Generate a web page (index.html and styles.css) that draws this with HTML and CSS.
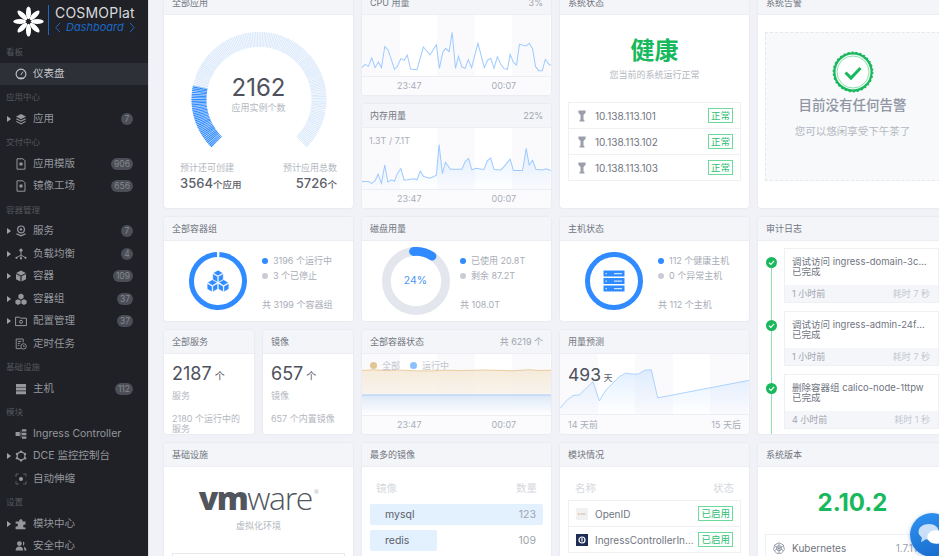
FILE: index.html
```html
<!DOCTYPE html>
<html lang="zh-CN">
<head>
    <meta charset="UTF-8">
    <title>COSMOPlat Dashboard</title>
    <link rel="stylesheet" href="styles.css">
</head>
<body>
    <aside class="sidebar">
        <div class="brand">
            <svg class="brand-logo" viewBox="0 0 32 32">
                <g fill="#fff">
                    <ellipse cx="16" cy="7" rx="2.6" ry="6.6"/>
                    <ellipse cx="16" cy="7" rx="2.6" ry="6.6" transform="rotate(45 16 16)"/>
                    <ellipse cx="16" cy="7" rx="2.6" ry="6.6" transform="rotate(90 16 16)"/>
                    <ellipse cx="16" cy="7" rx="2.6" ry="6.6" transform="rotate(135 16 16)"/>
                    <ellipse cx="16" cy="7" rx="2.6" ry="6.6" transform="rotate(180 16 16)"/>
                    <ellipse cx="16" cy="7" rx="2.6" ry="6.6" transform="rotate(225 16 16)"/>
                    <ellipse cx="16" cy="7" rx="2.6" ry="6.6" transform="rotate(270 16 16)"/>
                    <ellipse cx="16" cy="7" rx="2.6" ry="6.6" transform="rotate(315 16 16)"/>
                </g>
            </svg>
            <div class="brand-text">
                <div class="brand-name">COSMOPlat</div>
                <div class="brand-sub">
                    <svg viewBox="0 0 6 11"><path d="M5 .8.9 5.5 5 10.2" fill="none" stroke="currentColor" stroke-width="1"/></svg>
                    <span>Dashboard</span>
                    <svg viewBox="0 0 6 11"><path d="M1 .8 5.1 5.5 1 10.2" fill="none" stroke="currentColor" stroke-width="1"/></svg>
                </div>
            </div>
        </div>

        <div class="nav-label">看板</div>
        <div class="nav-item active">
            <span class="caret none"></span>
            <svg class="nav-icon" viewBox="0 0 12 12"><circle cx="6" cy="6" r="4.9" fill="none" stroke="currentColor" stroke-width="1.1"/><path d="M3.3 9.6h5.4v1.4H3.3zM5.4 6.4 8 3.4l.5.4-2.3 3.2z" fill="currentColor"/></svg>
            <span class="nav-text">仪表盘</span>
        </div>

        <div class="nav-label">应用中心</div>
        <div class="nav-item">
            <span class="caret"></span>
            <svg class="nav-icon" viewBox="0 0 12 12"><path d="M6 1 11 3.6 6 6.2 1 3.6zM1.6 5.3 6 7.6l4.4-2.3.6.9L6 8.8 1 6.2zM1.6 7.9 6 10.2l4.4-2.3.6.9L6 11.4 1 8.8z" fill="currentColor"/></svg>
            <span class="nav-text">应用</span>
            <span class="badge">7</span>
        </div>

        <div class="nav-label">交付中心</div>
        <div class="nav-item">
            <span class="caret none"></span>
            <svg class="nav-icon" viewBox="0 0 12 12"><path d="M2 .8h6l2 2v8.4H2z" fill="none" stroke="currentColor"/><rect x="4.4" y="4.4" width="3.2" height="3.2" rx=".8" fill="currentColor"/></svg>
            <span class="nav-text">应用模版</span>
            <span class="badge">906</span>
        </div>
        <div class="nav-item">
            <span class="caret none"></span>
            <svg class="nav-icon" viewBox="0 0 12 12"><path d="M2 .8h6l2 2v8.4H2z" fill="none" stroke="currentColor"/><circle cx="6" cy="6" r="1.7" fill="currentColor"/></svg>
            <span class="nav-text">镜像工场</span>
            <span class="badge">656</span>
        </div>

        <div class="nav-label">容器管理</div>
        <div class="nav-item">
            <span class="caret"></span>
            <svg class="nav-icon" viewBox="0 0 12 12"><circle cx="6" cy="4.4" r="3.4" fill="none" stroke="currentColor" stroke-width="1.2"/><circle cx="6" cy="4.4" r="1.2" fill="currentColor"/><path d="M1.4 8.2 6 10l4.6-1.8v1.2L6 11.6 1.4 9.4z" fill="currentColor"/></svg>
            <span class="nav-text">服务</span>
            <span class="badge">7</span>
        </div>
        <div class="nav-item">
            <span class="caret"></span>
            <svg class="nav-icon" viewBox="0 0 12 12"><path d="M6 3v4M6 7 1.6 9.6M6 7l4.4 2.6M6 7v3.4" fill="none" stroke="currentColor" stroke-width=".9"/><circle cx="6" cy="2.2" r="1.6" fill="currentColor"/><circle cx="1.5" cy="9.8" r="1.1" fill="currentColor"/><circle cx="10.5" cy="9.8" r="1.1" fill="currentColor"/><circle cx="6" cy="10.4" r="1.1" fill="currentColor"/></svg>
            <span class="nav-text">负载均衡</span>
            <span class="badge">4</span>
        </div>
        <div class="nav-item">
            <span class="caret"></span>
            <svg class="nav-icon" viewBox="0 0 12 12"><path d="M6 .6 10.8 3 6 5.4 1.2 3zM1 4l4.4 2.2v5.2L1 9.2zM11 4 6.6 6.2v5.2L11 9.2z" fill="currentColor"/></svg>
            <span class="nav-text">容器</span>
            <span class="badge">109</span>
        </div>
        <div class="nav-item">
            <span class="caret"></span>
            <svg class="nav-icon" viewBox="0 0 12 12"><path d="M6 .6 8.6 2v3L6 6.4 3.4 5V2zM3 6.2l2.6 1.4v3L3 12 .4 10.6v-3zM9 6.2l2.6 1.4v3L9 12l-2.6-1.4v-3z" fill="currentColor"/></svg>
            <span class="nav-text">容器组</span>
            <span class="badge">37</span>
        </div>
        <div class="nav-item">
            <span class="caret"></span>
            <svg class="nav-icon" viewBox="0 0 12 12"><path d="M.6 2.2h4l1 1h5.8v7.4H.6z" fill="none" stroke="currentColor"/><circle cx="6" cy="6.8" r="1.5" fill="none" stroke="currentColor"/></svg>
            <span class="nav-text">配置管理</span>
            <span class="badge">37</span>
        </div>
        <div class="nav-item">
            <span class="caret none"></span>
            <svg class="nav-icon" viewBox="0 0 12 12"><path d="M6 10.6H1.2V1h7v3.4M2.8 3.4h3.6M2.8 5.4h2.4M2.8 7.4h1.6" fill="none" stroke="currentColor" stroke-width=".9"/><circle cx="8.6" cy="8.4" r="2.7" fill="none" stroke="currentColor" stroke-width=".9"/><path d="M8.6 7v1.5h1.2" fill="none" stroke="currentColor" stroke-width=".7"/></svg>
            <span class="nav-text">定时任务</span>
        </div>

        <div class="nav-label">基础设施</div>
        <div class="nav-item">
            <span class="caret none"></span>
            <svg class="nav-icon" viewBox="0 0 12 12"><path d="M1 1h10v3H1zM1 4.6h10v3H1zM1 8.2h10v3H1z" fill="currentColor"/></svg>
            <span class="nav-text">主机</span>
            <span class="badge">112</span>
        </div>

        <div class="nav-label">模块</div>
        <div class="nav-item">
            <span class="caret none"></span>
            <svg class="nav-icon" viewBox="0 0 12 12"><path d="M.6 4h4.2v4H.6zM7 1.2h4.4v2.4H7zM7 4.8h4.4v2.4H7zM7 8.400h4.400v2.400H7z" fill="currentColor"/><path d="M4.8 6h2.2M6 2.400V9.600" fill="none" stroke="currentColor" stroke-width=".6"/></svg>
            <span class="nav-text">Ingress Controller</span>
        </div>
        <div class="nav-item">
            <span class="caret"></span>
            <svg class="nav-icon" viewBox="0 0 12 12"><circle cx="6" cy="6" r="3.9" fill="none" stroke="currentColor" stroke-width="1.2"/><g fill="currentColor"><circle cx="6" cy="1.6" r="1.2"/><circle cx="10" cy="4" r="1.2"/><circle cx="10" cy="8.2" r="1.2"/><circle cx="6" cy="10.4" r="1.2"/><circle cx="2" cy="8.2" r="1.2"/><circle cx="2" cy="4" r="1.2"/></g></svg>
            <span class="nav-text">DCE 监控控制台</span>
        </div>
        <div class="nav-item">
            <span class="caret none"></span>
            <svg class="nav-icon" viewBox="0 0 12 12"><circle cx="6" cy="6" r="2" fill="currentColor"/><path d="M1 3.400V1h2.400M8.600 1H11v2.400M11 8.600V11H8.600M3.400 11H1V8.600" fill="none" stroke="currentColor" stroke-dasharray="1 1"/></svg>
            <span class="nav-text">自动伸缩</span>
        </div>

        <div class="nav-label">设置</div>
        <div class="nav-item">
            <span class="caret"></span>
            <svg class="nav-icon" viewBox="0 0 12 12"><path d="M4.2 2.6a1.7 1.7 0 0 1 3.3 0v.8h3v3h-.9a1.5 1.5 0 0 0 0 3h.9v1.8H.6V8.6h.9a1.5 1.5 0 0 0 0-3H.6V3.4h3.6z" fill="currentColor"/></svg>
            <span class="nav-text">模块中心</span>
        </div>
        <div class="nav-item">
            <span class="caret none"></span>
            <svg class="nav-icon" viewBox="0 0 12 12"><circle cx="4.4" cy="3.6" r="2.4" fill="currentColor"/><path d="M.6 10.6c0-2.6 1.6-4 3.8-4s3.8 1.4 3.8 4zM8 1.4a2.4 2.4 0 0 1 0 4.4M9 6.800c1.500.4 2.400 1.800 2.400 3.800H9.400" fill="currentColor"/></svg>
            <span class="nav-text">安全中心</span>
        </div>
    </aside>

    <main class="main">
        <div class="board">
            <section class="card wide tall">
                <header class="card-head">全部应用</header>
                <div class="gauge-body">
                    <div class="gauge">
                        <svg viewBox="0 0 148 125">
                            <path d="M31.6 116.9A60 60 0 1 1 116.4 116.9" fill="none" stroke="#dbe9fb" stroke-width="15" stroke-dasharray="1.1 .5"/>
                            <path d="M31.6 116.9A60 60 0 0 1 15.3 62" fill="none" stroke="#2f8bff" stroke-width="15" stroke-dasharray="1.1 .5"/>
                        </svg>
                        <div class="gauge-text">
                            <div class="gauge-num">2162</div>
                            <div class="muted">应用实例个数</div>
                        </div>
                    </div>
                    <div class="gauge-foot">
                        <div>
                            <div class="muted">预计还可创建</div>
                            <div class="gauge-val">3564<small>个应用</small></div>
                        </div>
                        <div class="right">
                            <div class="muted">预计应用总数</div>
                            <div class="gauge-val">5726<small>个</small></div>
                        </div>
                    </div>
                </div>
            </section>

            <section class="card wide">
                <header class="card-head">CPU 用量<span class="head-extra">3%</span></header>
                <div class="chart">
                    <svg viewBox="21 45 564 183" preserveAspectRatio="none">
                        <polyline fill="none" stroke="#9ecbff" stroke-width="3" points="21,203 30,193 40,199 50,174 60,203 70,186 79,203 89,140 99,150 118,208 127,198 137,176 147,181 156,165 166,207 185,209 204,141 224,165 243,134 252,205 262,157 271,145 281,155 290,97 300,205 309,169 319,201 329,205 338,179 348,203 367,130 386,203 396,180 405,175 415,205 425,170 435,193 445,206 455,208 463,163 473,187 482,195 491,133 511,138 520,130 530,146 539,200 549,212 559,212 568,178 578,192 585,196"/>
                    </svg>
                </div>
                <footer class="time-axis"><span>23:47</span><span>00:07</span></footer>
            </section>

            <section class="card wide tall">
                <header class="card-head">系统状态</header>
                <div class="health">健康</div>
                <div class="muted center health-sub">您当前的系统运行正常</div>
                <ul class="rows">
                    <li class="row">
                        <svg class="pin" viewBox="0 0 8 12"><path d="M.4.4h7.200v2.400L5.500 5v4.800h.9v1.800H1.600V9.800h.9V5L.4 2.800z" fill="#9a9fab"/></svg>
                        <span class="row-name">10.138.113.101</span><span class="tag">正常</span>
                    </li>
                    <li class="row">
                        <svg class="pin" viewBox="0 0 8 12"><path d="M.4.4h7.200v2.400L5.500 5v4.800h.9v1.800H1.600V9.800h.9V5L.4 2.800z" fill="#9a9fab"/></svg>
                        <span class="row-name">10.138.113.102</span><span class="tag">正常</span>
                    </li>
                    <li class="row">
                        <svg class="pin" viewBox="0 0 8 12"><path d="M.4.4h7.200v2.400L5.500 5v4.800h.9v1.800H1.600V9.800h.9V5L.4 2.800z" fill="#9a9fab"/></svg>
                        <span class="row-name">10.138.113.103</span><span class="tag">正常</span>
                    </li>
                </ul>
            </section>

            <section class="card wide tall">
                <header class="card-head">系统告警</header>
                <div class="alert-wrap">
                    <div class="alert-box">
                        <svg class="seal" viewBox="0 0 42 42">
                            <circle cx="21" cy="21" r="18.6" fill="none" stroke="#18b95d" stroke-width="2.2"/>
                            <circle cx="21" cy="21" r="19.6" fill="none" stroke="#18b95d" stroke-width="1.6" stroke-dasharray="2 2.1"/>
                            <circle cx="21" cy="21" r="16" fill="#fff" stroke="#6fd79c" stroke-width=".8"/>
                            <path d="M13.5 21.500 19 27l9.500-10" fill="none" stroke="#18b95d" stroke-width="3"/>
                        </svg>
                        <div class="alert-title">目前没有任何告警</div>
                        <div class="alert-sub">您可以悠闲享受下午茶了</div>
                    </div>
                </div>
            </section>

            <section class="card wide">
                <header class="card-head">内存用量<span class="head-extra">22%</span></header>
                <div class="chart">
                    <svg viewBox="21 383 564 185" preserveAspectRatio="none">
                        <defs>
                            <linearGradient id="fade" x1="0" y1="0" x2="0" y2="1">
                                <stop offset="0" stop-color="#9ecbff" stop-opacity=".3"/>
                                <stop offset="1" stop-color="#9ecbff" stop-opacity="0"/>
                            </linearGradient>
                        </defs>
                        <polygon fill="url(#fade)" points="21,568 21,545 40,545 50,551 60,543 69,523 79,551 89,495 98,547 108,541 118,544 127,520 137,506 147,541 156,540 176,537 185,540 195,514 205,530 224,535 243,526 251,433 261,521 270,487 285,508 300,508 319,508 329,485 339,475 349,510 360,505 385,509 395,482 405,474 415,509 435,510 445,500 463,477 473,512 500,512 511,445 520,495 530,481 540,508 560,510 570,507 585,512 585,568"/>
                        <polyline fill="none" stroke="#9ecbff" stroke-width="3" points="21,545 40,545 50,551 60,543 69,523 79,551 89,495 98,547 108,541 118,544 127,520 137,506 147,541 156,540 176,537 185,540 195,514 205,530 224,535 243,526 251,433 261,521 270,487 285,508 300,508 319,508 329,485 339,475 349,510 360,505 385,509 395,482 405,474 415,509 435,510 445,500 463,477 473,512 500,512 511,445 520,495 530,481 540,508 560,510 570,507 585,512"/>
                    </svg>
                    <span class="chart-note">1.3T / 7.1T</span>
                </div>
                <footer class="time-axis"><span>23:47</span><span>00:07</span></footer>
            </section>

            <section class="card wide">
                <header class="card-head">全部容器组</header>
                <div class="donut-body">
                    <div class="donut">
                        <svg viewBox="0 0 68 68">
                            <circle cx="34" cy="34" r="26.5" fill="none" stroke="#2f8bff" stroke-width="5" stroke-dasharray="163 3.5" transform="rotate(-87 34 34)"/>
                            <g fill="#2f8bff" stroke="#fff" stroke-width=".5" transform="translate(6.8 6) scale(.8)">
                                <path d="M34 21.500 40 25l-6 3.500-6-3.500zM27.500 26l6 3.500v7l-6-3.500zM40.500 26l-6 3.500v7l6-3.500z"/>
                                <path d="M27 33.500l6 3.500-6 3.500-6-3.500zM20.500 38l6 3.500v7l-6-3.500zM33.500 38l-6 3.500v7l6-3.500z"/>
                                <path d="M41 33.500l6 3.500-6 3.500-6-3.500zM34.500 38l6 3.500v7l-6-3.500zM47.500 38l-6 3.500v7l6-3.500z"/>
                            </g>
                        </svg>
                    </div>
                    <div class="donut-info">
                        <div class="legend"><i class="dot blue"></i>3196 个运行中</div>
                        <div class="legend"><i class="dot gray"></i>3 个已停止</div>
                        <div class="total">共 3199 个容器组</div>
                    </div>
                </div>
            </section>

            <section class="card wide">
                <header class="card-head">磁盘用量</header>
                <div class="donut-body">
                    <div class="donut">
                        <svg viewBox="0 0 68 68">
                            <circle cx="34" cy="34" r="29.6" fill="none" stroke="#e3e6ed" stroke-width="8.8"/>
                            <path d="M31.500 4.500A29.6 29.6 0 0 1 50 9.100" fill="none" stroke="#2f8bff" stroke-width="8.8" stroke-linecap="round"/>
                        </svg>
                        <span class="donut-pct">24%</span>
                    </div>
                    <div class="donut-info">
                        <div class="legend"><i class="dot blue"></i>已使用 20.8T</div>
                        <div class="legend"><i class="dot gray"></i>剩余 87.2T</div>
                        <div class="total">共 108.0T</div>
                    </div>
                </div>
            </section>

            <section class="card wide">
                <header class="card-head">主机状态</header>
                <div class="donut-body">
                    <div class="donut">
                        <svg viewBox="0 0 68 68">
                            <circle cx="34" cy="34" r="26.5" fill="none" stroke="#2f8bff" stroke-width="5" stroke-dasharray="165.5 1" transform="rotate(-89 34 34)"/>
                            <g fill="#2f8bff">
                                <rect x="23.5" y="23.5" width="21" height="6"/>
                                <rect x="23.5" y="31" width="21" height="6"/>
                                <rect x="23.5" y="38.5" width="21" height="6"/>
                            </g>
                            <g fill="#cfe4ff">
                                <rect x="25.5" y="26" width="1.5" height="1.2"/><rect x="34" y="26" width="8" height="1.2"/>
                                <rect x="25.5" y="33.5" width="1.5" height="1.2"/><rect x="34" y="33.5" width="8" height="1.2"/>
                                <rect x="25.5" y="41" width="1.5" height="1.2"/><rect x="34" y="41" width="8" height="1.2"/>
                            </g>
                        </svg>
                    </div>
                    <div class="donut-info">
                        <div class="legend"><i class="dot blue"></i>112 个健康主机</div>
                        <div class="legend"><i class="dot gray"></i>0 个异常主机</div>
                        <div class="total">共 112 个主机</div>
                    </div>
                </div>
            </section>

            <section class="card wide audit">
                <header class="card-head">审计日志</header>
                <div class="audit-body">
                    <div class="entry">
                        <i class="entry-dot"><svg viewBox="0 0 11 11"><path d="M3 5.600 4.900 7.400 8.100 3.900" fill="none" stroke="#fff" stroke-width="1.2"/></svg></i>
                        <div class="entry-main"><span class="entry-line">调试访问 ingress-domain-3cf0d9a1b</span>已完成</div>
                        <div class="entry-foot"><span>1 小时前</span><span class="entry-cost">耗时 7 秒</span></div>
                    </div>
                    <div class="entry">
                        <i class="entry-dot"><svg viewBox="0 0 11 11"><path d="M3 5.600 4.900 7.400 8.100 3.900" fill="none" stroke="#fff" stroke-width="1.2"/></svg></i>
                        <div class="entry-main"><span class="entry-line">调试访问 ingress-admin-24f7c1e8d</span>已完成</div>
                        <div class="entry-foot"><span>1 小时前</span><span class="entry-cost">耗时 7 秒</span></div>
                    </div>
                    <div class="entry">
                        <i class="entry-dot"><svg viewBox="0 0 11 11"><path d="M3 5.600 4.900 7.400 8.100 3.900" fill="none" stroke="#fff" stroke-width="1.2"/></svg></i>
                        <div class="entry-main"><span class="entry-line">删除容器组 calico-node-1ttpw</span>已完成</div>
                        <div class="entry-foot"><span>4 小时前</span><span class="entry-cost">耗时 1 秒</span></div>
                    </div>
                </div>
            </section>

            <section class="card">
                <header class="card-head">全部服务</header>
                <div class="stat">
                    <div class="stat-num">2187<small>个</small></div>
                    <div class="muted stat-name">服务</div>
                    <div class="muted stat-desc">2180 个运行中的服务</div>
                </div>
            </section>

            <section class="card">
                <header class="card-head">镜像</header>
                <div class="stat">
                    <div class="stat-num">657<small>个</small></div>
                    <div class="muted stat-name">镜像</div>
                    <div class="muted stat-desc">657 个内置镜像</div>
                </div>
            </section>

            <section class="card wide">
                <header class="card-head">全部容器状态<span class="head-extra">共 6219 个</span></header>
                <div class="chart">
                    <svg viewBox="0 0 188 61" preserveAspectRatio="none">
                        <defs>
                            <linearGradient id="tan" x1="0" y1="0" x2="0" y2="1">
                                <stop offset="0" stop-color="#f5e8d5" stop-opacity=".85"/>
                                <stop offset="1" stop-color="#f8f2ea" stop-opacity=".85"/>
                            </linearGradient>
                            <linearGradient id="run" x1="0" y1="0" x2="0" y2="1">
                                <stop offset="0" stop-color="#dce8f7"/>
                                <stop offset="1" stop-color="#fff"/>
                            </linearGradient>
                        </defs>
                        <path d="M0 16.500 12 15.800 24 16.600 36 16 54 16.800 66 17 84 16.200 100 16.600 120 16 138 16.400 150 16.800 166 15.800 178 16.600 188 16.200V41H0z" fill="url(#tan)"/>
                        <path d="M0 41h188v20H0z" fill="url(#run)"/>
                        <path d="M0 16.500 12 15.800 24 16.600 36 16 54 16.800 66 17 84 16.200 100 16.600 120 16 138 16.400 150 16.800 166 15.800 178 16.600 188 16.200" fill="none" stroke="#e6c996" stroke-width=".9"/>
                        <path d="M0 41h188" stroke="#a8d0fb" stroke-width="1"/>
                    </svg>
                    <div class="chart-legend">
                        <span><i class="dot tan"></i>全部</span>
                        <span><i class="dot sky"></i>运行中</span>
                    </div>
                </div>
                <footer class="time-axis"><span>23:47</span><span>00:07</span></footer>
            </section>

            <section class="card wide">
                <header class="card-head">用量预测</header>
                <div class="chart">
                    <svg viewBox="27 417 567 182" preserveAspectRatio="none">
                        <polygon fill="url(#fade)" points="27,599 27,582 47,558 66,543 85,541 126,501 145,559 165,526 205,486 224,475 243,478 262,478 282,466 301,465 320,550 594,497 594,599"/>
                        <polyline fill="none" stroke="#9ecbff" stroke-width="2.5" points="27,582 47,558 66,543 85,541 126,501 145,559 165,526 205,486 224,475 243,478 262,478 282,466 301,465 320,550 594,497"/>
                    </svg>
                    <div class="forecast"><b>493</b> 天</div>
                </div>
                <footer class="range-axis"><span>14 天前</span><span>15 天后</span></footer>
            </section>

            <section class="card wide tall">
                <header class="card-head">基础设施</header>
                <div class="vm-logo"><b>vm</b>ware<sup>®</sup></div>
                <div class="muted center vm-sub">虚拟化环境</div>
                <div class="vm-box"></div>
            </section>

            <section class="card wide tall">
                <header class="card-head">最多的镜像</header>
                <div class="table-head image-head"><span>镜像</span><span>数量</span></div>
                <div class="bars">
                    <div class="bar"><i class="bar-fill full"></i><span>mysql</span><em>123</em></div>
                    <div class="bar"><i class="bar-fill mid"></i><span>redis</span><em>109</em></div>
                    <div class="bar"><i class="bar-fill small"></i><span>nginx</span><em>87</em></div>
                </div>
            </section>

            <section class="card wide tall">
                <header class="card-head">模块情况</header>
                <div class="table-head module-head"><span>名称</span><span>状态</span></div>
                <ul class="rows flush">
                    <li class="row">
                        <svg class="mod-icon" viewBox="0 0 12 12"><rect width="12" height="12" fill="#f1f1f1"/><path d="M2 5.500h1.500v1H2z" fill="#f0993c"/><path d="M4.500 5.700h5v.6h-5z" fill="#999"/></svg>
                        <span class="row-name">OpenID</span><span class="tag">已启用</span>
                    </li>
                    <li class="row">
                        <svg class="mod-icon" viewBox="0 0 12 12"><rect width="12" height="12" fill="#1e2c58"/><circle cx="6" cy="6" r="3" fill="none" stroke="#fff" stroke-width="1.2"/><path d="M5.400 4h1.200v3.500H5.400z" fill="#fff"/></svg>
                        <span class="row-name">IngressControllerInstance</span><span class="tag">已启用</span>
                    </li>
                </ul>
            </section>

            <section class="card wide tall">
                <header class="card-head">系统版本</header>
                <div class="version">2.10.2</div>
                <ul class="rows version-rows">
                    <li class="row">
                        <svg class="mod-icon" viewBox="0 0 12 12"><g fill="none" stroke="#8f95a3" stroke-width=".9"><path d="M6 .8 10.300 2.900 11.400 7.600 8.400 11.300H3.600L.6 7.600 1.700 2.900z"/><circle cx="6" cy="6.200" r="2.600"/><path d="M6 1.500v9.400M1.800 4 10.200 8.400M10.200 4 1.800 8.400"/></g></svg>
                        <span class="row-name">Kubernetes</span><span class="row-val">1.7.11</span>
                    </li>
                </ul>
            </section>
        </div>
    </main>

    <div class="chat">
        <svg viewBox="0 0 28 26">
            <path d="M11 2c5.500 0 9.500 3.200 9.500 7.500S16.500 17 11 17c-1 0-2-.1-2.900-.4L3.500 19.500l.8-4.400C2.300 13.700 1 11.700 1 9.500 1 5.200 5.500 2 11 2z" fill="#fff" opacity=".75"/>
            <path d="M18 8c4.700 0 8.500 2.800 8.500 6.500 0 2-1.100 3.700-2.800 4.900l.7 3.900-4.200-2.500c-.7.100-1.400.2-2.200.2-4.700 0-8.500-2.800-8.500-6.500S13.300 8 18 8z" fill="#fff"/>
        </svg>
    </div>
</body>
</html>
```
FILE: styles.css
```css
* { box-sizing: border-box; }
html, body { height: 100%; }
body { margin: 0; display: flex; overflow: hidden; background: #f1f2f7; color: #71757f; font: 9px/12px Inter, "Noto Sans CJK SC", sans-serif; }
ul { list-style: none; margin: 0; padding: 0; }
small { font-size: inherit; }

/* sidebar */
.sidebar { flex: 0 0 149px; height: 100%; overflow: hidden; background: #1f2126; border-right: 1px solid #dfe1e6; color: #95979d; }
.brand { display: flex; height: 40px; align-items: center; padding: 2px 0 0 13px; }
.brand-logo { width: 31px; height: 31px; margin-top: 0; }
.brand-text { margin: -2px 0 0 4px; padding-left: 6px; border-left: 1.5px solid #1c68c4; height: 30px; }
.brand-name { color: #d9dade; font-size: 14px; line-height: 15px; letter-spacing: .2px; }
.brand-sub { display: flex; align-items: center; gap: 5px; color: #1c68c4; font-size: 11px; line-height: 15px; font-style: italic; }
.brand-sub svg { width: 6px; height: 11px; }

.nav-label { height: 22.5px; padding-left: 6px; color: #55575d; font-size: 8.5px; line-height: 24px; }
.nav-item { display: flex; height: 22.5px; align-items: center; padding-right: 15px; font-size: 10.5px; }
.nav-item.active { background: #2d3037; color: #c2c4c9; }
.caret { width: 0; height: 0; margin-left: 7px; border-left: 4px solid #a0a2a8; border-top: 3px solid transparent; border-bottom: 3px solid transparent; }
.caret.none { border-color: transparent; }
.nav-icon { width: 12px; height: 12px; margin: 0 6px 0 4px; flex: none; }
.nav-text { flex: 1; white-space: nowrap; }
.badge { min-width: 12px; height: 12px; padding: 0 3px; border-radius: 6px; background: #4b4e56; color: #85878d; font-size: 8.5px; line-height: 12px; text-align: center; }

/* grid of cards */
.main { flex: 1; height: 100%; overflow: hidden; }
.board { display: grid; grid-template-columns: repeat(8, 90px); grid-auto-rows: 104px; gap: 9px; margin: -9px 0 0 15px; }
.card { display: flex; flex-direction: column; overflow: hidden; background: #fff; border-radius: 3px; box-shadow: 0 0 2px rgba(60, 70, 100, .12); }
.wide { grid-column: span 2; }
.tall { grid-row: span 2; }
.audit { grid-row: span 2; }
.card-head { display: flex; flex: 0 0 24px; justify-content: space-between; align-items: center; padding: 0 8px; background: #f4f5f9; border-bottom: 1px solid #eceef3; }
.head-extra { color: #a0a4ae; }
.muted { color: #b3b7c0; }
.center { text-align: center; }

/* gauge */
.gauge-body { display: flex; flex: 1; flex-direction: column; padding-top: 10px; }
.gauge { position: relative; width: 148px; height: 125px; margin: 0 auto; }
.gauge svg { display: block; width: 148px; height: 125px; }
.gauge-text { position: absolute; top: 49px; left: 0; right: 0; text-align: center; }
.gauge-num { color: #4e525c; font-size: 24px; line-height: 28px; }
.gauge-foot { display: flex; justify-content: space-between; margin-top: 12px; padding: 0 16px; }
.gauge-val { margin-top: 2px; color: #5c606a; font-size: 13px; line-height: 15px; font-weight: 500; }
.gauge-val small { font-size: 9.5px; }
.right { text-align: right; }

/* charts */
.chart { position: relative; flex: 1; min-height: 0; background: repeating-linear-gradient(90deg, #fafafd 0 37.6px, #fff 37.6px 75.2px); }
.chart svg { display: block; width: 100%; height: 100%; }
.chart-note { position: absolute; top: 7px; left: 7px; color: #a9adb7; }
.chart-legend { position: absolute; top: 6px; left: 8px; display: flex; gap: 10px; color: #c2c5cd; }
.chart-legend .dot { margin-right: 5px; width: 7px; height: 7px; }
.time-axis { display: flex; flex: 0 0 19px; align-items: center; background: #fbfbfd; border-top: 1px solid #eceef3; color: #a9adb7; }
.time-axis span { flex: 1; text-align: center; }
.range-axis { display: flex; flex: 0 0 20px; align-items: center; justify-content: space-between; padding: 0 8px; background: #fbfbfd; border-top: 1px solid #eceef3; color: #a9adb7; }
.forecast { position: absolute; top: 10px; left: 8px; color: #5c606a; font-size: 9px; line-height: 22px; }
.forecast b { font-size: 17.5px; font-weight: 400; color: #4e525c; }

/* status lists */
.health { margin-top: 21px; color: #18b95d; font-size: 24px; line-height: 30px; font-weight: 700; text-align: center; }
.health-sub { margin-top: 3px; }
.rows { margin: 21px 8px 0; border: 1px solid #eef0f4; border-bottom: 0; }
.rows.flush { margin-top: 0; }
.rows.version-rows { margin: 16px 0 0 7px; }
.row { display: flex; height: 26px; align-items: center; padding-right: 7px; border-bottom: 1px solid #eef0f4; }
.pin { width: 8px; height: 12px; margin: 0 9px 0 9px; flex: none; }
.mod-icon { width: 12px; height: 12px; margin: 0 7px 0 7px; flex: none; }
.row-name { flex: 1; min-width: 0; overflow: hidden; color: #71757f; font-size: 10px; white-space: nowrap; text-overflow: ellipsis; }
.row-val { margin-right: 22px; color: #9a9fab; font-size: 10px; }
.tag { flex: none; height: 15px; margin-left: 2px; padding: 0 2px; border: 1px solid #6ddb9c; color: #2cc06f; font-size: 9.5px; line-height: 13px; }

/* alert */
.alert-wrap { flex: 1; padding: 17px 7px 0; }
.alert-box { display: flex; height: 149px; flex-direction: column; align-items: center; padding-top: 18px; background: #f8f9fb; border: 1px dashed #e6e8ee; }
.seal { width: 42px; height: 42px; }
.alert-title { margin-top: 2px; color: #8f95a3; font-size: 13.5px; line-height: 20px; font-weight: 500; }
.alert-sub { margin-top: 10px; color: #b3b7c0; font-size: 10.5px; line-height: 14px; }

/* donuts */
.donut-body { display: flex; flex: 1; }
.donut { position: relative; flex: none; width: 68px; height: 68px; margin: 5.5px 0 0 19.5px; }
.donut svg { display: block; width: 68px; height: 68px; }
.donut-pct { position: absolute; top: 28px; left: 0; right: 0; color: #4a94f5; font-size: 10.5px; text-align: center; }
.donut-info { display: flex; flex-direction: column; margin-left: 10.5px; padding: 11.5px 0 9px; color: #a9adb7; }
.legend { line-height: 15px; white-space: nowrap; }
.total { margin-top: auto; line-height: 15px; white-space: nowrap; }
.dot { display: inline-block; width: 6px; height: 6px; margin-right: 5px; border-radius: 50%; vertical-align: 0; }
.dot.blue { background: #2f8bff; }
.dot.gray { background: #c9ccd4; }
.dot.tan { background: #e0c694; }
.dot.sky { background: #8cc0ff; }

/* audit */
.audit-body { position: relative; flex: 1; padding: 7px 8px 0 26px; overflow: hidden; }
.audit-body::before { content: ""; position: absolute; top: 20px; bottom: 0; left: 12.5px; width: 1.5px; background: #93dfb3; }
.entry { position: relative; display: flex; height: 55px; margin-bottom: 8px; flex-direction: column; border: 1px solid #eef0f4; }
.entry-dot { position: absolute; top: 8px; left: -19px; width: 11px; height: 11px; border-radius: 50%; background: #18b95d; }
.entry-dot svg { display: block; width: 11px; height: 11px; }
.entry-main { flex: 1; padding: 8px 10px 0 7px; color: #71757f; font-size: 9.5px; line-height: 10px; }
.entry-line { display: block; overflow: hidden; white-space: nowrap; text-overflow: ellipsis; }
.entry-foot { display: flex; flex: 0 0 17px; align-items: center; justify-content: space-between; padding: 0 8px 0 7px; background: #f5f6fa; color: #a0a4ae; }
.entry-cost { color: #c5c8d0; }

/* stat cards */
.stat { flex: 1; padding: 9px 8px 0; overflow: hidden; }
.stat-num { color: #4e525c; font-size: 18px; line-height: 22px; }
.stat-num small { margin-left: 3px; font-size: 10px; }
.stat-name { margin-top: 3px; }
.stat-desc { margin-top: 12px; line-height: 10px; }

/* bottom row */
.vm-logo { margin-top: 13px; color: #51555e; font: 300 32px/36px "Open Sans", sans-serif; letter-spacing: -1.3px; text-align: center; }
.vm-logo b { font-weight: 800; letter-spacing: -1.5px; }
.vm-logo sup { margin-left: 2px; font-size: 5px; line-height: 0; vertical-align: 16px; letter-spacing: 0; }
.vm-sub { margin-top: 4px; }
.vm-box { height: 60px; margin: 21px 8px 0; border: 1px solid #e6e8ee; }
.table-head { display: flex; justify-content: space-between; color: #d5d8de; font-size: 10.5px; }
.image-head { padding: 15px 14px 0 14px; line-height: 14px; }
.module-head { padding: 15px 15px 4px 15px; line-height: 14px; }
.bars { margin: 8px 8px 0; }
.bar { position: relative; display: flex; height: 21px; margin-bottom: 5px; align-items: center; justify-content: space-between; padding: 0 7px 0 15px; font-size: 10.5px; color: #5c606a; }
.bar span, .bar em { position: relative; }
.bar em { color: #a0a4ae; font-style: normal; }
.bar-fill { position: absolute; top: 0; bottom: 0; left: 0; border-radius: 2px; background: #e3f0fd; }
.bar-fill.full { width: 100%; }
.bar-fill.mid { width: 39%; }
.bar-fill.small { width: 30%; }
.version { margin-top: 21px; color: #18b95d; font-size: 24px; line-height: 30px; font-weight: 700; text-align: center; }

/* floating chat */
.chat { position: fixed; top: 513px; left: 910px; display: flex; width: 44px; height: 44px; align-items: center; justify-content: center; border-radius: 50%; background: linear-gradient(160deg, #2f94f2, #1768c9); box-shadow: 0 1px 4px rgba(30, 90, 170, .35); }
.chat svg { width: 30px; height: 27px; }
```
